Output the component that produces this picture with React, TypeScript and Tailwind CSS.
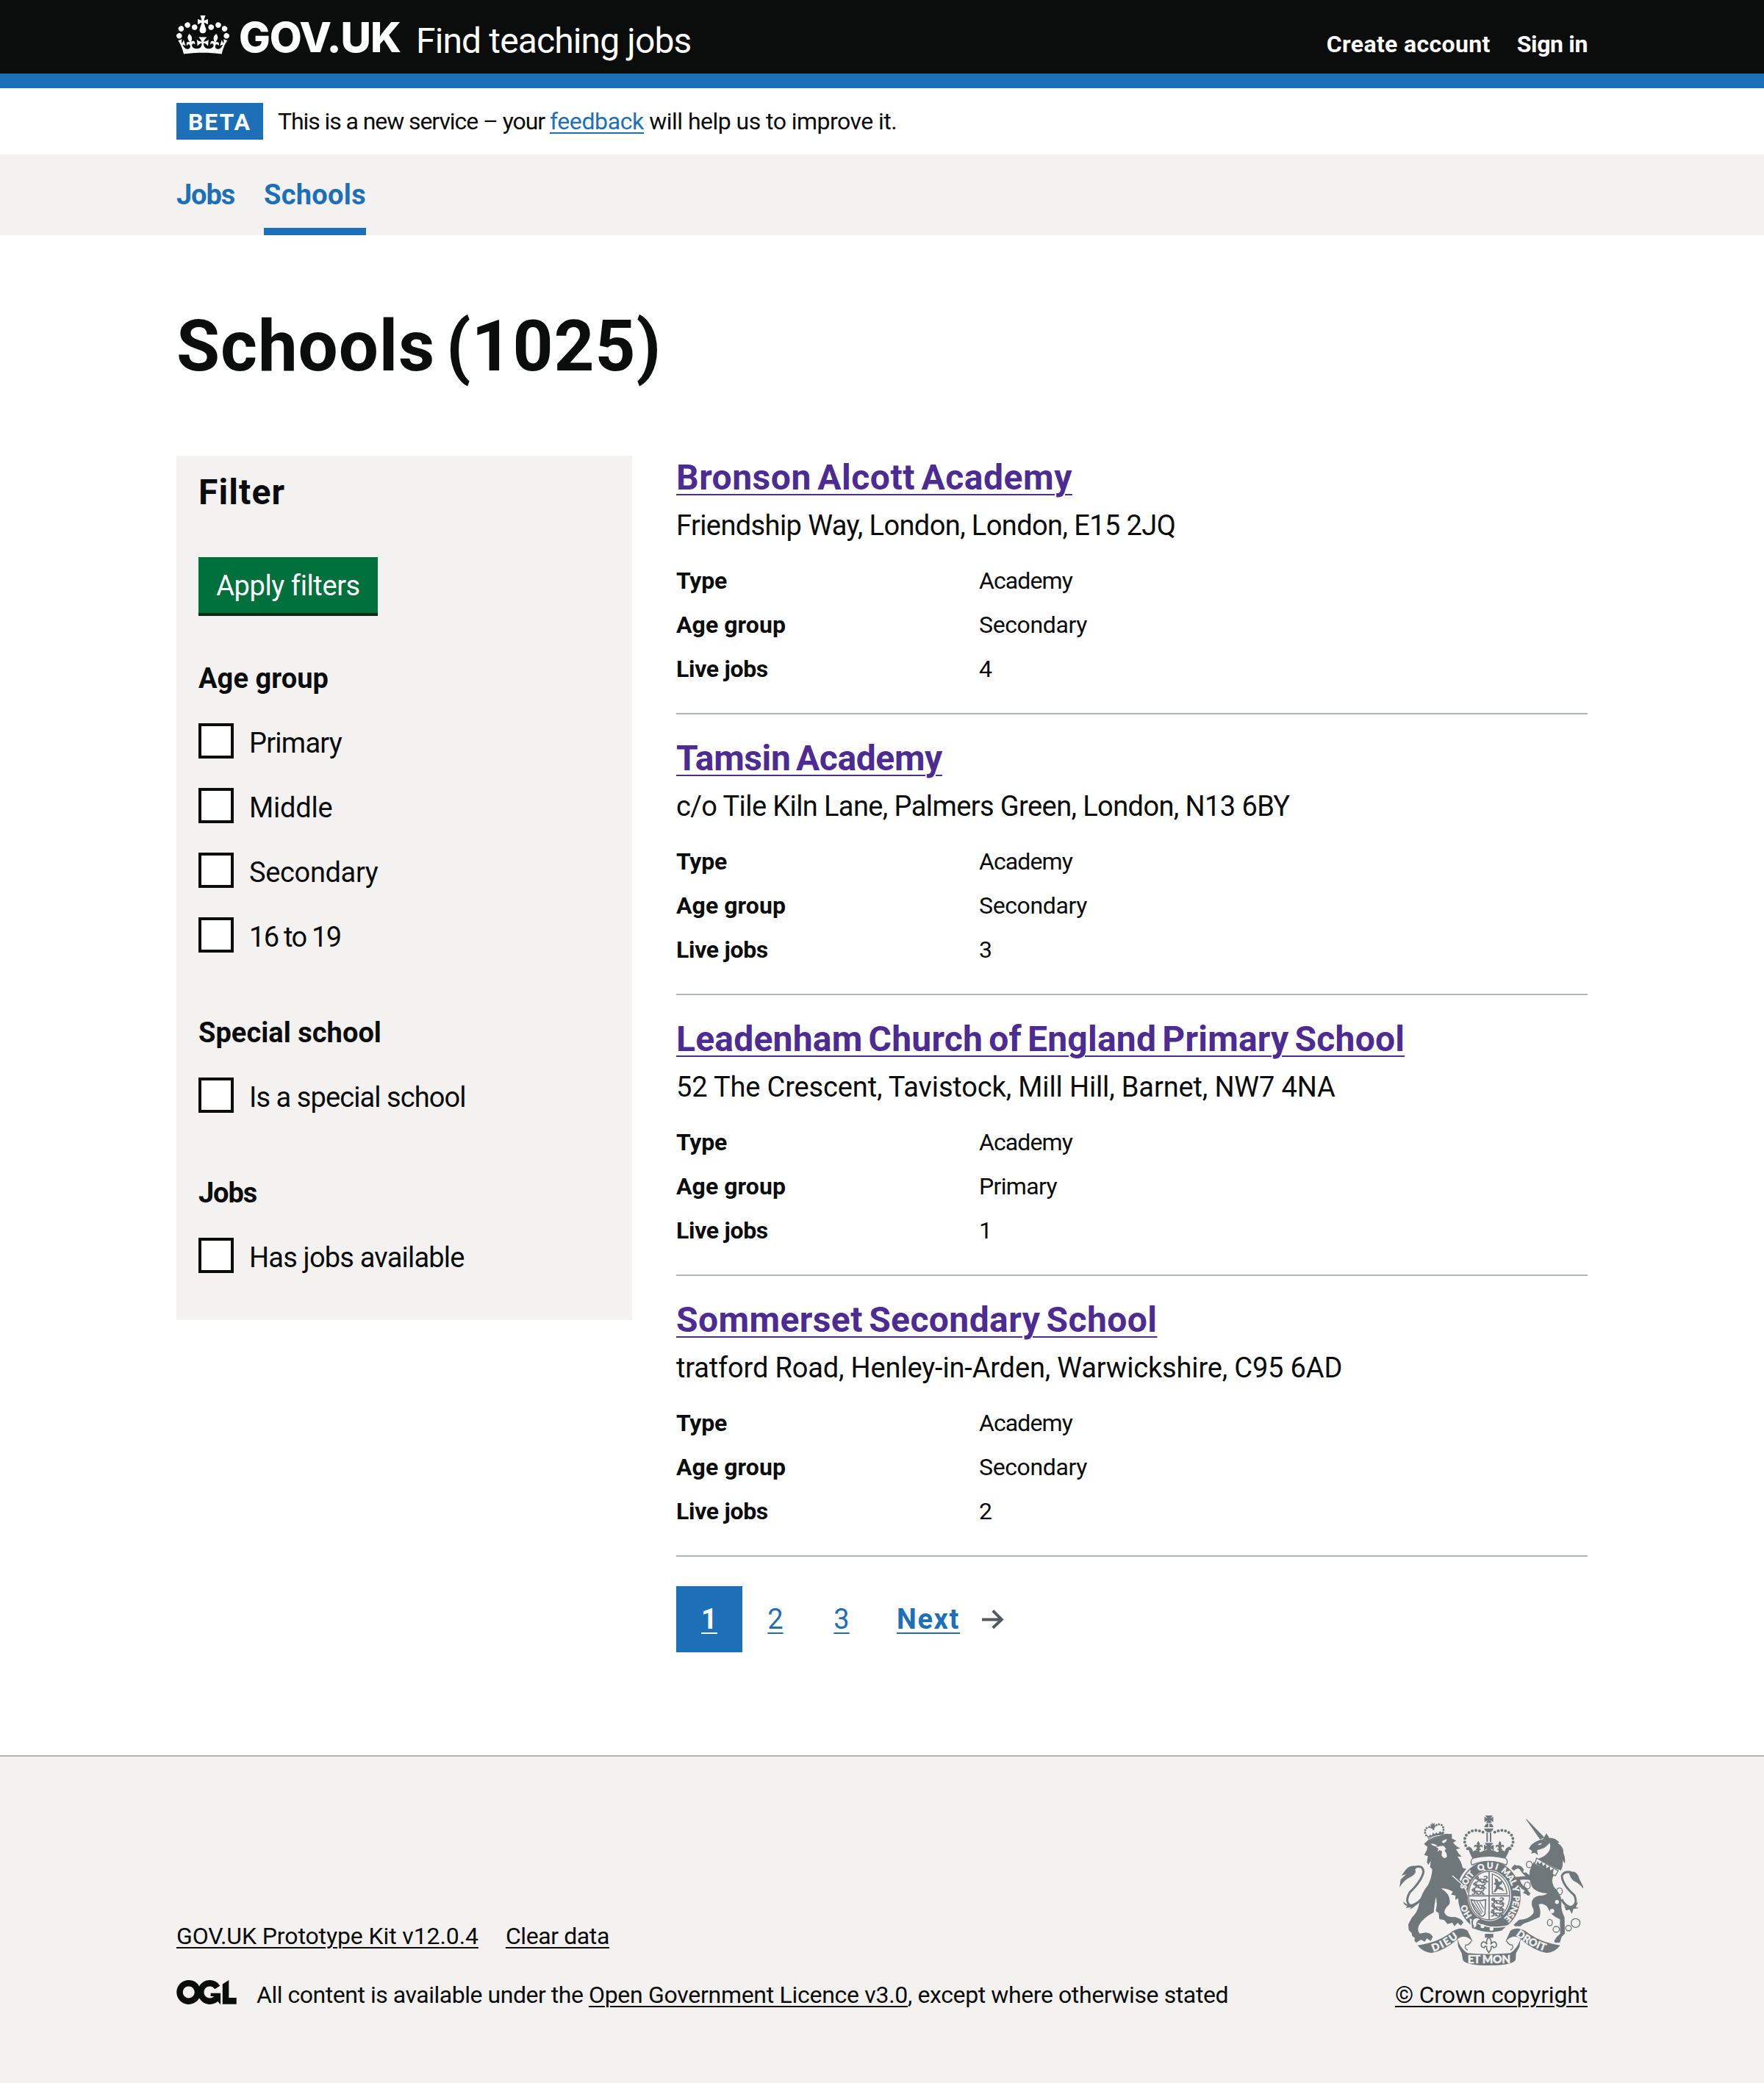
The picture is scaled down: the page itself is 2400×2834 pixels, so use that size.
import React from 'react';

const schools = [
  {
    name: 'Bronson Alcott Academy',
    nameClass: 'tracking-[0.53px] [word-spacing:-4px]',
    address: 'Friendship Way, London, London, E15 2JQ',
    addressClass: 'tracking-[-0.6px]',
    ageGroup: 'Secondary',
    ageClass: 'tracking-[-0.37px]',
    jobs: '4',
  },
  {
    name: 'Tamsin Academy',
    nameClass: 'tracking-[-0.39px] [word-spacing:-4px]',
    address: 'c/o Tile Kiln Lane, Palmers Green, London, N13 6BY',
    addressClass: 'tracking-[-0.6px]',
    ageGroup: 'Secondary',
    ageClass: 'tracking-[-0.37px]',
    jobs: '3',
  },
  {
    name: 'Leadenham Church of England Primary School',
    nameClass: 'tracking-[0.21px] [word-spacing:-4px]',
    address: '52 The Crescent, Tavistock, Mill Hill, Barnet, NW7 4NA',
    addressClass: 'tracking-[-0.14px]',
    ageGroup: 'Primary',
    ageClass: 'tracking-[-0.65px]',
    jobs: '1',
  },
  {
    name: 'Sommerset Secondary School',
    nameClass: 'tracking-[0.41px] [word-spacing:-4px]',
    address: 'tratford Road, Henley-in-Arden, Warwickshire, C95 6AD',
    addressClass: 'tracking-[-0.16px]',
    ageGroup: 'Secondary',
    ageClass: 'tracking-[-0.37px]',
    jobs: '2',
  },
];

const groups = [
  {
    title: 'Age group',
    titleClass: 'mt-[61px] tracking-[0.07px]',
    options: [
      { label: 'Primary', cls: 'tracking-[-0.75px]' },
      { label: 'Middle', cls: 'tracking-[-0.2px]' },
      { label: 'Secondary', cls: 'tracking-[-0.35px]' },
      { label: '16 to 19', cls: 'tracking-[-1.7px]' },
    ],
  },
  {
    title: 'Special school',
    titleClass: 'mt-[85px] tracking-[0.03px]',
    options: [{ label: 'Is a special school', cls: 'tracking-[-0.92px]' }],
  },
  {
    title: 'Jobs',
    titleClass: 'mt-[85px] tracking-[-1.14px]',
    options: [{ label: 'Has jobs available', cls: 'tracking-[-0.8px]' }],
  },
];

function Crown() {
  return (
    <svg className="mt-[21px] block h-[53px] w-[72px]" viewBox="0 0 132 97" fill="currentColor" fillRule="evenodd" aria-hidden="true">
      <path d="M25 30.2c3.5 1.5 7.7-.2 9.1-3.7 1.5-3.6-.2-7.8-3.9-9.2-3.6-1.4-7.6.3-9.1 3.9-1.4 3.5.3 7.5 3.9 9zM9 39.5c3.6 1.5 7.8-.2 9.2-3.7 1.5-3.6-.2-7.8-3.9-9.1-3.6-1.5-7.6.2-9.1 3.8-1.4 3.5.3 7.5 3.8 9zM4.4 57.2c3.5 1.5 7.7-.2 9.1-3.8 1.5-3.6-.2-7.7-3.9-9.1-3.5-1.5-7.6.3-9.1 3.8-1.4 3.5.3 7.6 3.9 9.1zm38.3-21.4c3.5 1.5 7.7-.2 9.1-3.8 1.5-3.6-.2-7.7-3.9-9.1-3.6-1.5-7.6.3-9.1 3.8-1.3 3.6.4 7.7 3.9 9.1zm64.4-5.6c-3.6 1.5-7.8-.2-9.1-3.7-1.5-3.6.2-7.8 3.8-9.2 3.6-1.4 7.7.3 9.2 3.9 1.3 3.5-.4 7.5-3.9 9zm15.9 9.3c-3.6 1.5-7.7-.2-9.1-3.7-1.5-3.6.2-7.8 3.7-9.1 3.6-1.5 7.7.2 9.2 3.8 1.5 3.5-.3 7.5-3.8 9zm4.7 17.7c-3.6 1.5-7.8-.2-9.2-3.8-1.5-3.6.2-7.7 3.9-9.1 3.6-1.5 7.7.3 9.2 3.8 1.3 3.5-.4 7.6-3.9 9.1zM89.3 35.8c-3.6 1.5-7.8-.2-9.2-3.8-1.4-3.6.2-7.7 3.9-9.1 3.6-1.5 7.7.3 9.2 3.8 1.4 3.6-.3 7.7-3.9 9.1zM69.7 17.7l8.9 4.7V9.3l-8.9 2.8c-.2-.3-.5-.6-.9-.9L72.4 0H59.6l3.5 11.2c-.3.3-.6.5-.9.9l-8.8-2.8v13.1l8.8-4.7c.3.3.6.7.9.9l-5 15.4v.1c-.2.8-.4 1.6-.4 2.4 0 4.1 3.1 7.5 7 8.1h.2c.3 0 .7.1 1 .1.4 0 .7 0 1-.1h.2c4-.6 7.1-4.1 7.1-8.1 0-.8-.1-1.7-.4-2.4V34l-5.1-15.4c.4-.2.7-.6 1-.9zM66 92.8c16.9 0 32.8 1.1 47.1 3.2 4-16.9 8.9-26.7 14-33.5l-9.6-3.4c1 4.9 1.1 7.2 0 10.2-1.5-1.4-3-4.3-4.2-8.7L108.6 76c2.8-2 5-3.2 7.5-3.3-4.4 9.4-10 11.9-13.6 11.2-4.3-.8-6.3-4.6-5.6-7.9 1-4.7 5.7-5.9 8-.5 4.3-8.7-3-11.4-7.6-8.8 7.1-7.2 7.9-13.5 2.1-21.1-8 6.1-8.1 12.3-4.5 20.8-4.7-5.4-12.1-2.5-9.5 6.2 3.4-5.2 7.9-2 7.2 3.1-.6 4.3-6.4 7.8-13.5 7.2-10.3-.9-10.9-8-11.2-13.8 2.5-.5 7.1 1.8 11 7.3L80.2 60c-4.1 4.4-8 5.3-12.3 5.4 1.4-4.4 8-11.6 8-11.6H55.5s6.4 7.2 7.9 11.6c-4.2-.1-8-1-12.3-5.4l1.4 16.4c3.9-5.5 8.5-7.7 10.9-7.3-.3 5.8-.9 12.8-11.1 13.8-7.2.6-12.9-2.9-13.5-7.2-.7-5 3.8-8.3 7.1-3.1 2.7-8.7-4.6-11.6-9.4-6.2 3.7-8.5 3.6-14.7-4.6-20.8-5.8 7.6-5 13.9 2.2 21.1-4.7-2.6-11.9.1-7.7 8.8 2.3-5.5 7.1-4.2 8.1.5.7 3.3-1.3 7.1-5.7 7.9-3.5.7-9-1.8-13.5-11.2 2.5.1 4.7 1.3 7.5 3.3l-4.7-15.4c-1.2 4.4-2.7 7.2-4.3 8.7-1.1-3-.9-5.3 0-10.2l-9.5 3.4c5 6.9 9.9 16.7 14 33.5 14.8-2.1 30.8-3.2 47.7-3.2z" />
    </svg>
  );
}

function OglLogo() {
  return (
    <svg className="block h-[33px] w-[82px]" viewBox="0 0 483.2 195.7" fill="currentColor" aria-hidden="true">
      <path d="M421.5 142.8V.1l-50.7 32.3v161.1h112.4v-50.7zm-122.3-9.6A47.12 47.12 0 0 1 221 97.8c0-26 21.1-47.1 47.1-47.1 16.7 0 31.4 8.7 39.7 21.8l42.7-27.2A97.63 97.63 0 0 0 268.1 0c-36.5 0-68.3 20.1-85.1 49.7A98 98 0 0 0 97.8 0C43.9 0 0 43.9 0 97.8s43.9 97.8 97.8 97.8c36.5 0 68.3-20.1 85.1-49.7a97.76 97.76 0 0 0 149.6 25.4l19.4 22.2h3v-87.8h-80v24.3l27.5.5zM97.8 145c-26 0-47.1-21.1-47.1-47.1s21.1-47.1 47.1-47.1 47.1 21.1 47.1 47.1S123.8 145 97.8 145" />
    </svg>
  );
}

// Small heraldic lion passant used in the quartered shield.
function Passant({ x, y }: { x: number; y: number }) {
  return (
    <g transform={`translate(${x} ${y}) scale(1.3 1)`} fill="none" stroke="currentColor" strokeWidth="4.5" strokeLinecap="round">
      <path d="M0 -2q-1 -9 5 -8q5 3 0 6M5 2q9 -5 22 -1M10 2l-5 9l-5 1M13 2l4 8h-5M27 1l-3 10l-5 1M29 2l7 9h-6M29 -1q8 -1 6 -9q-5 -4 -9 0" />
      <circle cx="6" cy="-1" r="4" fill="currentColor" stroke="none" />
    </g>
  );
}

function Fleur({ x, y }: { x: number; y: number }) {
  return (
    <path
      transform={`translate(${x} ${y})`}
      d="M0 -24q-9 10 -4 20q-3 -7 -10 -4q-7 6 0 12q-1 -7 5 -5q3 3 4 9h-5v5h5v8h10v-8h5v-5h-5q1 -6 4 -9q6 -2 5 5q7 -6 0 -12q-7 -3 -10 4q5 -10 -4 -20z"
    />
  );
}

function Arms() {
  return (
    <svg className="block h-[204px] w-[250px] text-[#6f777b]" viewBox="72 60 750 612" fill="currentColor" aria-hidden="true">
      {/* lion's crown */}
      <path d="M190 158L184 140L192 146L197 137L204 143L209 130L216 137L222 129L230 135L237 124L245 130L252 124L252 146Q218 146 190 158Z" />
      <path d="M181 141Q170 122 184 110Q196 104 208 112M250 130Q256 108 243 98Q228 92 214 106" fill="none" stroke="currentColor" strokeWidth="9" strokeLinecap="round" strokeDasharray="0 11" />
      <path d="M203 88l6 7 8-5-2 9 7 3-9 4 2 12-7 3-2-12-9 3 4-9-6-5 9-1z" />
      <path d="M190 153Q216 142 254 140" fill="none" stroke="#f3f2f1" strokeWidth="3" />
      {/* lion */}
      <path d="M172 176L190 160Q235 144 259 135L286 136L286 154L304 163L291 171Q304 188 321 194L303 198Q312 216 326 228L309 228Q326 250 330 274L345 278Q325 300 317 322L343 350L349 410L342 400L338 416L328 402L319 413L314 397L300 404L301 387L283 383L290 371Q266 357 242 358Q286 385 276 422Q256 440 255 455Q265 478 296 474Q326 480 333 497L322 510L310 498L296 512L288 498L268 503L255 487L235 483L232 458L220 450Q228 425 221 392Q214 425 212 455Q165 480 152 508Q142 530 155 542L180 538Q202 540 208 556L200 572L184 562L175 575L160 567L140 580L133 570L135 560L124 552L122 540L110 528L108 505L122 478Q146 455 152 422Q162 375 188 345Q204 315 206 280L197 271L200 245L190 262L184 250L188 226L173 221L184 200L186 188Z" />
      <path d="M200 176Q214 172 228 186Q214 190 200 176ZM245 166Q255 158 266 156Q264 170 250 173ZM222 190Q236 184 252 184L262 196L256 204Q270 218 264 230Q252 240 244 222L246 206L236 202L226 208L232 196Z" fill="#f3f2f1" />
      <path d="M184 362Q160 420 118 428Q92 414 114 374Q164 325 170 290Q168 262 138 270" fill="none" stroke="currentColor" strokeWidth="9" />
      <path d="M148 268Q116 260 99 280L80 306L99 300L77 322L72 354Q92 322 120 310Q144 296 136 280ZM88 412Q102 428 128 424L152 416L128 436L113 444L120 434L98 438L104 429Q88 426 88 412Z" />
      {/* unicorn */}
      <path d="M588 75L592 76L664 150L646 158Z" />
      <path d="M600 196L610 180Q632 162 658 157L672 133L684 152Q706 150 725 170L717 172Q744 190 741 212Q751 235 747 256L738 244Q741 268 731 284L714 278L636 238Q668 228 681 208Q692 190 685 172Q670 192 650 197L634 202L637 222L625 212L610 215L613 204Z" />
      <path d="M636 180q8 -8 18 -6q-5 8 -18 6z" fill="#f3f2f1" />
      <path d="M620 250L704 302Q688 320 702 350Q736 385 733 415Q730 445 746 476L747 542L734 556L727 578L708 580L703 572L714 556L728 543L727 484Q690 470 675 432Q655 414 640 424Q652 450 644 475L600 494Q575 500 566 512L544 512L538 506L560 486Q602 482 614 464Q626 455 614 432Q604 398 640 388Q665 388 676 378Q640 378 618 358Q598 330 604 284Z" />
      <path d="M632 234L720 286L708 306L624 258Z" fill="#f3f2f1" stroke="currentColor" strokeWidth="4" />
      <path d="M630 259l7-13 6 12 11-9 3 17 13-9 2 18 14-9 1 18 15-8-4 24z" />
      <path d="M612 318Q585 302 572 282Q562 262 538 276M610 318Q580 312 556 318Q562 350 586 360L600 384" fill="none" stroke="currentColor" strokeWidth="13" />
      <path d="M528 276l14-16 14 8-16 18zM548 310l20 2-6 14-14-2zM586 366l20 10-4 12-26-12z" />
      <path d="M734 402Q748 432 772 434Q802 424 786 386Q736 342 735 306Q744 286 772 292" fill="none" stroke="currentColor" strokeWidth="9" />
      <path d="M764 290Q798 282 806 318L822 350L822 358Q802 334 782 326Q766 312 764 290ZM744 428Q768 444 788 424L802 412L792 434L806 438L782 442L776 462L766 444L752 448Z" />
      <g fill="none" stroke="currentColor" strokeWidth="4">
        <ellipse cx="602" cy="260" rx="12" ry="13" />
        <ellipse cx="594" cy="346" rx="12" ry="14" />
        <ellipse cx="725" cy="370" rx="12" ry="14" />
        <ellipse cx="686" cy="497" rx="10" ry="13" />
        <ellipse cx="712" cy="525" rx="13" ry="12" />
        <ellipse cx="762" cy="520" rx="12" ry="11" />
        <circle cx="791" cy="499" r="18" />
      </g>
      <g fill="#f3f2f1">
        <circle cx="715" cy="413" r="8" />
        <circle cx="695" cy="450" r="9" />
        <circle cx="583" cy="288" r="6" />
      </g>
      {/* royal crown */}
      <path d="M422 60h31l-10 12 12-7v22l-12-7 6 11h-24l6-11-12 7v-22l12 7zM418 108q4 -15 17 -15v15zM439 93q14 0 17 15h-17zM417 113h39q-6 16 -19 16t-20 -16z" />
      <path d="M350 196Q328 164 346 138Q368 114 402 124L426 134M524 196Q546 164 528 138Q506 114 472 124L448 134" fill="none" stroke="currentColor" strokeWidth="12" strokeLinecap="round" strokeDasharray="0 15" />
      <path d="M430 130v38M444 130v38" stroke="currentColor" strokeWidth="6" fill="none" />
      <path d="M352 186Q370 190 372 208Q384 194 402 210Q416 202 424 202H450Q458 202 472 210Q490 194 502 208Q504 190 524 186Q518 214 502 238Q437 220 372 238Q356 214 352 186Z" />
      <path d="M420 172h35l-11 14 13-7v24l-13-8 6 12h-26l6-12-13 8v-24l13 7z" />
      <Fleur x={394} y={188} />
      <Fleur x={482} y={188} />
      {/* garter */}
      <path fillRule="evenodd" d="M311 390A128 145 0 1 1 567 390A128 145 0 1 1 311 390ZM350 387A89 104 0 1 0 528 387A89 104 0 1 0 350 387Z" />
      <path d="M372 234Q437 218 504 234Q518 244 508 262Q437 232 368 262Q358 246 372 234Z" fill="#f3f2f1" stroke="currentColor" strokeWidth="4" />
      <ellipse cx="438" cy="387" rx="84" ry="99" fill="none" stroke="currentColor" strokeWidth="4" />
      <path d="M438 288V486M354 388H522" stroke="currentColor" strokeWidth="5" />
      <Passant x={384} y={320} />
      <Passant x={376} y={345} />
      <Passant x={370} y={370} />
      <Passant x={450} y={408} />
      <Passant x={450} y={434} />
      <Passant x={448} y={459} />
      <path d="M451 380V299Q504 318 511 380Z" fill="none" stroke="currentColor" strokeWidth="4" />
      <path d="M460 316l12 4 6 12 14-8-2 14-12 10 14 8 8 14-12-6-14-4-10 12-10 2 10-16 2-14-10-4 8-8z" />
      <path d="M364 404Q392 412 424 404L421 462Q412 476 404 470Q374 450 364 404Z" fill="none" stroke="currentColor" strokeWidth="5" />
      <path d="M376 410L408 462M388 411L413 456M400 412L416 440M370 418L402 464" stroke="currentColor" strokeWidth="3.5" />
      <path d="M288 306L322 336Q344 354 350 384" fill="none" stroke="#f3f2f1" strokeWidth="4" />
      <path id="garter-line" d="M439 503A98 113 0 0 1 341 390A98 113 0 0 1 439 277A98 113 0 0 1 537 390A98 113 0 0 1 439 503" fill="none" />
      <g fill="#f3f2f1" stroke="#f3f2f1" strokeWidth="1.2" fontFamily="Lato, sans-serif" fontWeight="900" fontSize="35">
        <text><textPath href="#garter-line" startOffset="80" textLength="54">HO</textPath></text>
        <text><textPath href="#garter-line" startOffset="192" textLength="74">SOIT</textPath></text>
        <text><textPath href="#garter-line" startOffset="286" textLength="78">QUI</textPath></text>
        <text><textPath href="#garter-line" startOffset="379" textLength="102">MAL Y</textPath></text>
        <text><textPath href="#garter-line" startOffset="494" textLength="104">PENSE</textPath></text>
      </g>
      <path d="M362 484Q430 530 516 510L490 532Q430 550 366 520Z" stroke="#f3f2f1" strokeWidth="5" />
      <circle cx="411" cy="512" r="8" fill="#f3f2f1" />
      <circle cx="448" cy="523" r="8" fill="#f3f2f1" />
      <path d="M404 484Q390 470 374 482Q364 496 374 512Q366 520 378 520Q392 514 388 500Q394 488 404 484Z" fill="#f3f2f1" stroke="currentColor" strokeWidth="5" />
      {/* pendant */}
      <path d="M421 543h34v16h-34z" />
      <path d="M437 556Q422 572 430 586Q416 568 407 582Q402 598 418 600Q420 590 428 596V606L437 620L446 606V596Q454 590 456 600Q472 598 467 582Q458 568 444 586Q452 572 437 556Z" fill="none" stroke="currentColor" strokeWidth="5" />
      {/* motto ribbon */}
      <path d="M146 590Q230 580 290 532Q325 512 350 530L372 576Q338 538 308 566Q254 612 204 621Q170 620 146 590Z" />
      <path d="M728 590Q646 580 586 532Q550 512 525 530L504 576Q538 538 568 566Q622 612 672 621Q706 620 728 590Z" />
      <path d="M308 562Q320 604 350 622Q437 630 524 622Q554 604 567 562L562 596L548 622L546 650Q530 672 437 672Q344 672 331 650L326 622L312 596Z" />
      <path d="M366 572Q356 590 344 588Q334 600 350 610M509 572Q519 590 531 588Q541 600 525 610" fill="none" stroke="currentColor" strokeWidth="4" />
      <path id="ribbon-left" d="M210 616Q262 600 322 552" fill="none" />
      <path id="ribbon-right" d="M546 548Q600 594 672 616" fill="none" />
      <g fill="#f3f2f1" stroke="#f3f2f1" strokeWidth="1.2" fontFamily="Lato, sans-serif" fontWeight="900" fontSize="42">
        <text><textPath href="#ribbon-left" textLength="118">DIEU</textPath></text>
        <text><textPath href="#ribbon-right" textLength="136">DROIT</textPath></text>
        <text x="350" y="663" fontSize="46" textLength="175">ET MON</text>
      </g>
    </svg>
  );
}

const link = 'underline decoration-2';

export default function App() {
  return (
    <div className="flex h-[2834px] w-[2400px] flex-col bg-white font-['Roboto',sans-serif] text-[#0b0c0c]">
      <header className="h-[120px] border-b-[20px] border-[#1d70b8] bg-[#0b0c0c] text-white">
        <div className="mx-auto flex w-[1920px] items-start whitespace-nowrap">
          <Crown />
          <span className="mt-5 ml-[13px] w-[241px] font-['Inter',sans-serif] text-[57px] leading-[61px] font-extrabold tracking-[-1.1px]">GOV.UK</span>
          <span className="mt-[31px] text-[48px] leading-[49px] tracking-[-0.87px]">Find teaching jobs</span>
          <nav className="mt-10 ml-auto flex gap-9 text-[32px] leading-[40px] font-bold">
            <a className="tracking-[0.35px]">Create account</a>
            <a className="tracking-[-0.35px]">Sign in</a>
          </nav>
        </div>
      </header>

      <div className="mx-auto flex h-[90px] w-[1920px] items-center whitespace-nowrap">
        <strong className="h-[50px] w-[118px] bg-[#1d70b8] pl-4 text-[32px] leading-[52px] font-bold tracking-[1.9px] text-white">BETA</strong>
        <p className="ml-5 text-[32px] leading-[50px] whitespace-pre">
          <span className="tracking-[-1.08px]">This is a new service – your </span>
          <a className={`${link} tracking-[-0.38px] text-[#1d70b8] underline-offset-4`}>feedback</a>
          <span className="tracking-[-0.54px]"> will help us to improve it.</span>
        </p>
      </div>

      <nav className="h-[110px] bg-[#f3f2f1]">
        <div className="mx-auto flex w-[1920px] gap-10 text-[38px] leading-[100px] font-bold text-[#1d70b8]">
          <a className="h-[110px] w-[79px] pt-[5px] tracking-[-1.14px]">Jobs</a>
          <a className="h-[110px] w-[139px] border-b-[10px] border-[#1d70b8] pt-[5px] tracking-[0.29px]">Schools</a>
        </div>
      </nav>

      <main className="mx-auto w-[1920px] whitespace-nowrap">
        <h1 className="mt-[101px] mb-[99px] text-[96px] leading-[100px] font-bold tracking-[0.9px] [word-spacing:-10px]">Schools (1025)</h1>

        <div className="flex items-start gap-[60px]">
          <aside className="h-[1176px] w-[620px] bg-[#f3f2f1] px-[30px] pt-[25px]">
            <h2 className="text-[48px] leading-[50px] font-bold tracking-[1.1px]">Filter</h2>
            <button className="mt-[63px] block h-20 w-[244px] border-b-4 border-[#002d18] bg-[#00703c] text-center text-[38px] leading-[78px] tracking-[-0.4px] text-white">
              Apply filters
            </button>
            {groups.map((g) => (
              <section key={g.title}>
                <h3 className={`text-[38px] leading-[48px] font-bold ${g.titleClass}`}>{g.title}</h3>
                <div className="mt-[37px] flex flex-col gap-10">
                  {g.options.map((o) => (
                    <label key={o.label} className="flex h-12 items-start gap-[21px]">
                      <span className="size-12 border-4 border-[#0b0c0c] bg-white" />
                      <span className={`text-[38px] leading-[55px] ${o.cls}`}>{o.label}</span>
                    </label>
                  ))}
                </div>
              </section>
            ))}
          </aside>

          <div className="w-[1240px]">
            {schools.map((s) => (
              <article key={s.name} className="mb-[30px] border-b-2 border-[#b1b4b6] pb-[30px]">
                <h2 className="text-[48px] leading-[59px] font-bold">
                  <a className={`${link} text-[#4c2c92] underline-offset-[6px] ${s.nameClass}`}>{s.name}</a>
                </h2>
                <p className={`mt-[11px] text-[38px] leading-[50px] ${s.addressClass}`}>{s.address}</p>
                <dl className="mt-5 grid grid-cols-[412px_1fr] text-[32px] leading-[60px]">
                  <dt className="font-bold tracking-[-0.25px]">Type</dt>
                  <dd className="tracking-[-0.89px]">Academy</dd>
                  <dt className="font-bold tracking-[0.05px]">Age group</dt>
                  <dd className={s.ageClass}>{s.ageGroup}</dd>
                  <dt className="font-bold tracking-[-0.32px]">Live jobs</dt>
                  <dd>{s.jobs}</dd>
                </dl>
              </article>
            ))}
            <nav className="mt-10 flex h-[90px] text-center text-[38px] leading-[90px] text-[#1d70b8]">
              <a className={`${link} w-[90px] bg-[#1d70b8] font-bold text-white underline-offset-[5px]`}>1</a>
              <a className={`${link} w-[90px] underline-offset-[5px]`}>2</a>
              <a className={`${link} w-[90px] underline-offset-[5px]`}>3</a>
              <a className="ml-[30px] flex items-center gap-[30px]">
                <span className={`${link} font-bold tracking-[1.62px] underline-offset-[5px]`}>Next</span>
                <svg className="h-[26px] w-[30px] text-[#505a5f]" viewBox="0 0 15 13" fill="currentColor" aria-hidden="true">
                  <path d="m8.107-0.0078125-1.4136 1.414 4.2926 4.293h-12.986v2h12.896l-4.1855 3.9766 1.377 1.4492 6.7441-6.4062-6.7246-6.7266z" />
                </svg>
              </a>
            </nav>
          </div>
        </div>
      </main>

      <footer className="mt-auto h-[446px] border-t-2 border-[#b1b4b6] bg-[#f3f2f1] pb-[100px] text-[32px] leading-[40px] whitespace-nowrap">
        <div className="mx-auto flex h-full w-[1920px] items-end justify-between">
          <div>
            <div className="flex gap-[37px]">
              <a className={`${link} tracking-[-0.11px] underline-offset-4`}>GOV.UK Prototype Kit v12.0.4</a>
              <a className={`${link} tracking-[-0.41px] underline-offset-4`}>Clear data</a>
            </div>
            <div className="mt-10 flex items-start gap-[27px]">
              <OglLogo />
              <p className="whitespace-pre">
                <span className="tracking-[-0.47px]">All content is available under the </span>
                <a className={`${link} tracking-[-0.29px] underline-offset-4`}>Open Government Licence v3.0</a>
                <span className="tracking-[-0.4px]">, except where otherwise stated</span>
              </p>
            </div>
          </div>
          <div className="flex flex-col items-center gap-5">
            <Arms />
            <a className={`${link} tracking-[-0.17px] underline-offset-4`}>© Crown copyright</a>
          </div>
        </div>
      </footer>
    </div>
  );
}
